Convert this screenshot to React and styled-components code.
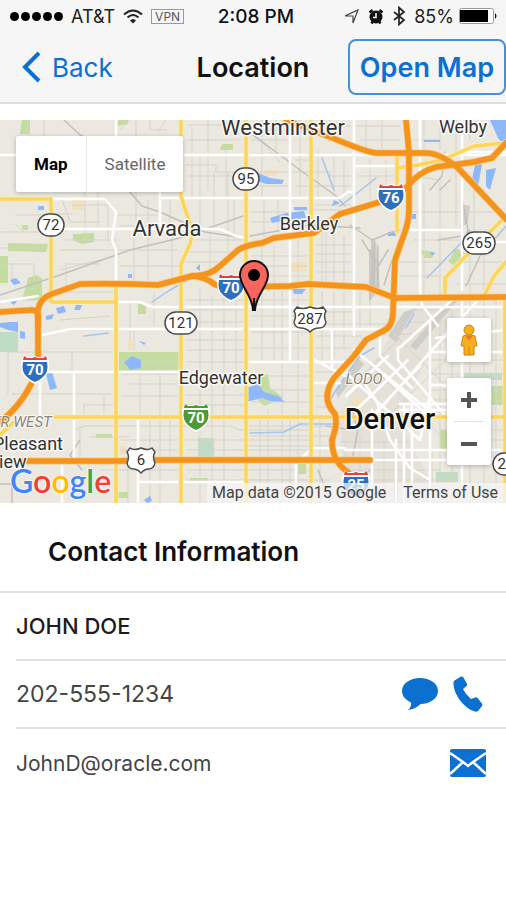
import React, { useState } from 'react';
import styled, { createGlobalStyle } from 'styled-components';

const colors = {
  COLOR_LINK: '#0b70cf',
  COLOR_BAR: '#f6f6f7',
  COLOR_LINE: '#dfe2e4',
  COLOR_LAND: '#ebe8e0',
  COLOR_STREET: '#d6d3ca',
  COLOR_PARK: '#c4dca0',
  COLOR_WATER: '#8fb8fb',
  COLOR_YELLOW: '#fbd55c',
  COLOR_ORANGE: '#f4941c',
};

/* ---------- map data ---------- */

const blocks = [
  'M28 120V135M44 120V136M16 215H50M16 225L24 232M0 232H50M0 264H34V283M0 248H50M12 283V264M66 264V285M66 264H100',
  'M62 200L70 222H100M58 214H72M72 205H112M66 240H116M60 250H116M85 192V240M98 192V226M108 200V240',
  'M120 130L130 120M136 120V136M150 120V130H166M166 120L158 132M188 125H240M188 140H240M192 130V200M208 120V190M226 150V196',
  'M186 165H216V172H244M188 176H240M200 154V228M214 172V230M228 172V250M136 192V220M148 200V232M170 200V230M118 215H158M120 226H150',
  'M134 238V280M148 236V284M172 232V280M118 250H178M120 266H180M196 240H244M188 252H240M186 262H222M210 226V270M234 200V240',
  'M60 270L116 256M62 292H116M8 300H48M60 330H112M8 352H112M8 352V394M72 352V372M12 394H112M84 405H114M84 405V417M104 396V414',
  'M60 320L110 316M130 300V340M154 292V326M134 332V350M122 362H178M122 374H178M130 384H178M122 396H178M140 372V417M160 374V503',
  'M75 430L84 426H230L240 430H310M80 430V460M90 437H130M122 440H178M122 450H178M150 420V456M170 420V456M100 470H178M128 463V503',
  'M150 470V503M186 300H244M186 310H244M186 322H244M186 340H244M186 350H244M186 362H244M200 290V370M212 296V370M224 290V503',
  'M236 290V370M186 395H244M186 405H244M200 390V503M212 385V503M186 440H310M186 450H310M186 470H310M186 480H310M250 480H330',
  'M252 130H288M252 140H288M262 120V196M276 120V150M252 154H288M252 172H330V176H350M262 142L280 162M296 160H308M300 120V198M318 150V200',
  'M320 126H350M330 120V136M334 158V200M344 160V196M252 186H288M296 186H350M252 212H286M264 200V236M278 200V232M252 222H286',
  'M296 210H340M300 210V240M316 205H350M322 222V284M252 256H308M252 266H308M252 276H308M262 248V284M274 246V284M298 240V286',
  'M316 245H352M316 254H350M316 262H350M316 272H352M334 232V284M344 236V284M326 222V284M252 300H308M252 316H308M252 332H308',
  'M262 292V362M274 292V362M282 292V360M298 292V360M252 348H308M316 312H352M316 324H386M316 336H362M316 348H350M322 292V362',
  'M334 292V358M344 292V350M360 292V330M370 290V326M252 376H308M252 390H308M252 402H308M268 410V503M282 364V503M298 364V503',
  'M250 426H330M250 436H330M250 446H330M250 490H340M260 417V503M290 417V503M316 372H332M316 396H328M316 407H330M320 420V503',
  'M354 126H400M366 120V150M382 120V148M360 140H400M358 176H400M370 160V200M386 160V190M414 140H440M424 120V150M440 120V150',
  'M456 120V152M470 120V140M414 176L440 180M424 186V300M440 176V300M456 170V226M474 184V236M412 212H500M414 240H460M400 262H440',
  'M400 276H440M420 240V300M470 240V296M484 240V296M456 262H506M456 284H506M412 310H440M406 322H430M400 334H420M440 320V503',
  'M452 310V503M470 300V503M484 300V503M496 300V503M428 360H506M428 374H506M428 390H506M428 400H506M440 430H506M440 440H506',
  'M345 440V503M360 436V503M384 440V503M396 450V503M340 442H410M345 470H440M345 480H450M340 490H450M432 450V503',
  'M355 350L440 435M390 330L450 390M345 392L400 338M380 424L450 356M350 372L410 432',
];

const rails = [
  'M0 295L60 275L130 250L180 238L246 215',
  'M64 120L80 135L115 150M130 192L142 206L160 212L205 232L246 238',
  'M253 135L300 170L336 196L345 206M370 250V300M350 225L372 240L372 290M372 240L392 232L400 230',
  'M374 240V292M378 246V290M362 240L376 262M388 250L376 270M392 260L384 285M250 236L310 225L360 228',
  'M445 152L442 176L430 190M450 180L440 190M438 240L462 236M466 286L480 256L506 226M462 200L468 230L460 256',
  'M352 460L358 430L352 410M360 480L370 470M318 470L330 500M326 426L352 430M82 470L70 455L80 440M0 484H12V503',
];

const whiteRoads = [
  'M0 155H506M116 120V155M51 199L105 199L116 212L112 240L116 250V285',
  'M160 192V226M160 198H290M290 198H340L348 192H354M354 120V335M290 120V362M354 166H400M420 120V290L422 305L438 326',
  'M51 229L220 229L236 236L246 238M462 120V290M462 205V230M410 230H462M496 242H506M460 152H506',
  'M0 302L38 296M116 302L140 302L152 307H506M42 335L70 329L246 329M48 372H116M74 372V460M40 372V420M120 372H180',
  'M246 362H352M138 417V503M138 482H246M62 465V503M246 329H390M332 329V367M311 358L345 376M311 383H340',
  'M462 296V378M380 335V356L395 370M430 320V395M398 348V360L445 415M452 300L397 350M480 298L430 352M430 352L376 414',
  'M430 352H506M345 372L420 440L430 395M436 338L506 330',
  'M354 350L436 416M388 356L346 396M408 360L356 410M420 366L372 416M374 366L426 414M386 362L412 388',
  'M366 386L376 400L390 440L410 468L430 480M372 410V503M396 440V503M404 404V503M412 404V503M430 395V503',
  'M345 450H506M370 460H506M400 404H448M400 410H448M430 385H448M300 460L312 448H345M296 463V503',
  'M444 386H448M462 465V483',
];

const yellowRoads = [
  'M181 120V196L184 206L193 232L190 244L181 264V503',
  'M246 120V503M311 120V503M0 199H51V302H116M116 285V503',
  'M55 417H506M505 298V503M397 156V232',
  'M397 168L418 165L442 160L474 146L506 143',
  'M445 296V278L466 256L506 216M484 296L494 276L506 262M0 435L14 422',
];

const highways = [
  'M0 312L30 310Q38 309 38 318V368Q26 402 0 422',
  'M38 326V310Q40 298 52 294L80 284Q116 283 158 285L192 276Q206 277 214 284Q218 287 240 287L290 286L308 284L366 287L395 298L506 297',
  'M192 276Q210 276 220 266L238 250Q246 245 262 243L274 238L314 233L340 214L380 202Q398 194 406 188Q418 172 436 167L474 162L492 158L506 143',
  'M286 120L330 137Q366 152 376 153H426Q440 153 458 168L506 219',
  'M406 120L409 152L409 212Q408 226 402 240L395 260L393 312Q393 328 381 332L366 340L354 356L334 378Q320 398 335 414Q338 424 332 440Q332 462 348 472',
  'M22 461H120L150 460H370',
];

const parks = [
  'M22 120H30V134H20ZM118 120H128V124L118 126ZM222 144H233V150H220ZM8 243L48 244L46 252L8 251ZM73 234L94 233V242L82 244L73 240Z',
  'M28 278L36 275L42 278V300H22ZM119 352H180V370L119 371ZM0 256H8V283H0ZM0 132V138M22 225H28V230H22ZM96 434H112V438H96Z',
  'M190 478H208V482H190ZM118 492H128V498H118ZM138 304H146V314H138ZM421 250L435 252L432 258L424 258ZM456 248L470 256L454 265L448 262Z',
  'M492 386H506V405H492ZM440 430H456V450H440ZM258 372L268 375L270 388L284 398L264 406L256 398ZM298 464H306V474H298Z',
];

const mints = ['M0 332H18V352H0Z', 'M198 438H214V458H198Z', 'M464 373H502V380H464Z', 'M436 472H458V482H436Z'];

const sands = ['M72 200H84V210H72ZM120 446H126V454H120ZM128 340H132V350H128ZM290 262H306V272H290ZM352 398H364V410L356 416ZM264 170H278V176H264Z'];

const waters = [
  'M124 362L132 356L141 360V368L130 370ZM46 374L52 372L57 388L50 390ZM38 206H44V210H38ZM10 280L16 278L21 283L14 285Z',
  'M56 308L64 306L66 312L58 314ZM46 316L54 314L52 319L46 320ZM76 305H82L80 310H74ZM0 323L10 322L18 322V332L8 330L0 327ZM20 331L25 332V339L20 338Z',
  'M56 290L66 286L62 292ZM58 308L68 306ZM139 341L146 343L144 345ZM10 302L18 300L14 305ZM128 274H132V278H128ZM196 268L200 264V271Z',
  'M256 172L270 178L284 180L282 184L266 184L258 181ZM270 218L286 213L304 211L306 218L286 220L272 223ZM294 207H307V210L294 210Z',
  'M490 120H506V148L498 138ZM475 165L482 164L478 186L471 184ZM486 170L496 168L490 190L486 186ZM424 140H440V142H424Z',
  'M430 252L435 253L432 256ZM292 289L306 289L302 294H294ZM334 200L340 203L332 206ZM411 214H416V219H411ZM388 232H396V236H388Z',
  'M246 388L258 384L264 392L278 396L285 402L270 401L262 398L246 402ZM144 500L150 496L152 501L147 503Z',
];

const streams = [
  'M427 278L460 244L470 230M340 206L356 194L376 178M322 158L334 190',
  'M330 400L340 384L360 356L374 348M406 328L414 314',
  'M250 433L284 432L300 424L340 424M84 336L108 333M152 302L170 290L188 280',
];

const Streets = ({ paths, stroke, width }) => (
  <g fill="none" stroke={stroke} strokeWidth={width} strokeLinejoin="round" strokeLinecap="round">
    {paths.map((d) => (
      <path key={d} d={d} />
    ))}
  </g>
);

const Areas = ({ paths, fill }) => <path d={paths.join('')} fill={fill} />;

const Interstate = ({ x, y, label, green }) => (
  <g transform={`translate(${x} ${y})`}>
    <path
      d="M-11 -14L-9 -12H-3L0 -13L3 -12H9L11 -14L14 -7Q15 3 9 9Q5 13 0 15Q-5 13 -9 9Q-15 3 -14 -7Z"
      fill="#fff"
    />
    <path d="M-11 -13L-8 -11H-3L0 -12L3 -11H8L11 -13L12 -9H-12Z" fill={green ? '#4c9a35' : '#dc4448'} />
    <path d="M-12 -7H12Q14 3 8 8Q5 11 0 13Q-5 11 -8 8Q-14 3 -12 -7Z" fill={green ? '#4c9a35' : '#2d6fbd'} />
    <ShieldText y="6" $light>
      {label}
    </ShieldText>
  </g>
);

const StateRoute = ({ x, y, label }) => {
  const w = label.length > 2 ? 32 : 26;
  return (
    <g transform={`translate(${x} ${y})`}>
      <rect x={-w / 2} y="-11" width={w} height="22" rx="11" fill="#fff" stroke="#4d4d4d" strokeWidth="1.5" />
      <ShieldText y="5">{label}</ShieldText>
    </g>
  );
};

const UsRoute = ({ x, y, label }) => {
  const w = label.length > 2 ? 16 : 14;
  return (
    <g transform={`translate(${x} ${y})`}>
      <path
        d={`M${-w + 3} -12Q${-w / 2} -9 0 -12Q${w / 2} -9 ${w - 3} -12L${w} -8Q${w - 3} -3 ${w} 3Q${w - 1} 9 ${w - 7} 9Q4 9 0 13Q-4 9 ${-w + 7} 9Q${-w + 1} 9 ${-w} 3Q${-w + 3} -3 ${-w} -8Z`}
        fill="#fff"
        stroke="#4d4d4d"
        strokeWidth="1.5"
      />
      <ShieldText y="5">{label}</ShieldText>
    </g>
  );
};

const DenverMap = () => (
  <MapSvg viewBox="0 120 506 383" preserveAspectRatio="xMidYMid slice" role="img" aria-label="Map of Denver">
    <rect x="0" y="120" width="506" height="383" fill={colors.COLOR_LAND} />
    <path d="M340 412L395 330L420 300L470 298L430 350L400 420L440 503H345Z" fill="#e5e1d9" />
    <path
      d="M372 250L376 240L380 290L370 300ZM388 336L404 312L416 308L396 342ZM410 346L450 300H458L416 350ZM335 390L358 358L364 364L338 398ZM462 204L470 206L468 222L460 230Z"
      fill="#cfcdc9"
    />
    <Areas paths={sands} fill="#f3e1bd" />
    <Areas paths={parks} fill={colors.COLOR_PARK} />
    <Areas paths={mints} fill="#bfdcc4" />
    <Streets paths={blocks} stroke={colors.COLOR_STREET} width="1" />
    <Areas paths={waters} fill={colors.COLOR_WATER} />
    <Streets paths={streams} stroke="#a5c4f0" width="1.5" />
    <Streets paths={rails} stroke="#c2c0bc" width="1.5" />
    <Streets paths={whiteRoads} stroke="#fff" width="2.5" />
    <Streets paths={yellowRoads} stroke="#fbeeba" width="5" />
    <Streets paths={yellowRoads} stroke={colors.COLOR_YELLOW} width="3.5" />
    <Streets paths={highways} stroke="#f9c98a" width="7" />
    <Streets paths={highways} stroke={colors.COLOR_ORANGE} width="5.5" />

    <StateRoute x={51} y={225} label="72" />
    <StateRoute x={246} y={179} label="95" />
    <StateRoute x={479} y={243} label="265" />
    <StateRoute x={181} y={323} label="121" />
    <StateRoute x={506} y={464} label="26" />
    <UsRoute x={310} y={319} label="287" />
    <UsRoute x={141} y={460} label="6" />
    <Interstate x={391} y={197} label="76" />
    <Interstate x={231} y={287} label="70" />
    <Interstate x={35} y={369} label="70" />
    <Interstate x={196} y={417} label="70" green />
    <Interstate x={356} y={484} label="25" />

    <PlaceText x="283" y="135" $size={22}>Westminster</PlaceText>
    <PlaceText x="463" y="133" $size={18}>Welby</PlaceText>
    <PlaceText x="167" y="236" $size={22}>Arvada</PlaceText>
    <PlaceText x="309" y="230" $size={18}>Berkley</PlaceText>
    <PlaceText x="221" y="384" $size={18}>Edgewater</PlaceText>
    <PlaceText x="28" y="450" $size={18}>Pleasant</PlaceText>
    <PlaceText x="7" y="468" $size={18}>View</PlaceText>
    <PlaceText x="390" y="429" $size={29} $dark>Denver</PlaceText>
    <AreaText x="364" y="384">LODO</AreaText>
    <AreaText x="22" y="427">ER WEST</AreaText>

    <path
      d="M253 310C252 294 240 287 240 275A14 14 0 0 1 268 275C268 287 256 294 255 310Z"
      fill="#f9645c"
      stroke="#111"
      strokeWidth="2"
    />
    <path d="M254 298V310" stroke="#111" strokeWidth="2" />
    <circle cx="254" cy="275" r="6" fill="#000" />
  </MapSvg>
);

/* ---------- status bar icons ---------- */

const WifiIcon = () => (
  <svg width="20" height="15" viewBox="0 0 20 15" fill="none" stroke="#222" strokeWidth="2">
    <path d="M1 5.5Q10 -2.5 19 5.5M4.5 8.5Q10 3.5 15.5 8.5" />
    <path d="M7 11.5Q10 8.5 13 11.5L10 14.5Z" fill="#222" stroke="none" />
  </svg>
);

const StatusIcons = () => (
  <svg width="64" height="20" viewBox="0 0 64 20">
    <path d="M0 10L13 4L8 17V10Z" fill="none" stroke="#444" strokeWidth="1.2" />
    <circle cx="31" cy="11" r="6.5" fill="#111" />
    <path
      d="M24.5 6.5L27.5 4M34.500 4L37.5 6.5M26.5 17.5L28 15.5M35.5 17.5L34 15.5"
      stroke="#111"
      strokeWidth="2.5"
    />
    <path d="M31 7V11.5H28" fill="none" stroke="#fff" strokeWidth="1.5" />
    <path d="M49 6L59 14L54 18.5V1.5L59 6L49 14" fill="none" stroke="#222" strokeWidth="1.7" />
  </svg>
);

const BatteryIcon = () => (
  <svg width="39" height="16" viewBox="0 0 39 16">
    <rect x="0.5" y="0.5" width="34" height="15" rx="2" fill="#fff" stroke="#999" />
    <rect x="1" y="2" width="28" height="12" fill="#000" />
    <path d="M36 5Q39 8 36 11Z" fill="#111" />
  </svg>
);

const PegmanIcon = () => (
  <svg width="18" height="32" viewBox="0 0 18 32">
    <path
      d="M3 12Q9 9 15 12L17 22H14V31H4V22H1Z"
      fill="#f6b01e"
      stroke="#c98613"
      strokeLinejoin="round"
    />
    <circle cx="9" cy="6" r="5" fill="#f6b01e" stroke="#c98613" />
    <path d="M5.500 12L9 17L12.5 12Z" fill="#ee7a2c" />
    <path d="M9 23V31" stroke="#c98613" />
  </svg>
);

/* ---------- contact icons ---------- */

const ChatIcon = () => (
  <svg width="36" height="34" viewBox="0 0 36 34" fill="currentColor">
    <path d="M18 1C8 1 0 6.5 0 14C0 19 3.5 23 9 25.5Q9.5 30 6 33Q14 32 18.5 27C28 27 36 21.500 36 14C36 6.5 28 1 18 1Z" />
  </svg>
);

const PhoneIcon = () => (
  <svg width="30" height="36" viewBox="0 0 30 36" fill="currentColor">
    <path d="M1.500 4.5L8 0.5Q9.5 0 10.5 1.5L14 8Q14.5 9.5 13 10.5L10 13Q12.5 18.500 18 23L22 21.5Q23.5 21 24.5 22L29 27.5Q30 29 29 30L25 35Q24 36 22 35.500C10 32 0 17 0.5 6.5Q0.5 5 1.5 4.5Z" />
  </svg>
);

const MailIcon = () => (
  <svg width="36" height="30" viewBox="0 0 36 30">
    <rect y="1" width="36" height="28" rx="2" fill="currentColor" />
    <path d="M0 5L13 14L18 18L23 14L36 5M0 26L13 14M36 26L23 14" fill="none" stroke="#fff" strokeWidth="2.5" />
  </svg>
);

const googleLetters = [
  ['G', '#4285f4'],
  ['o', '#ea4335'],
  ['o', '#fbbc05'],
  ['g', '#4285f4'],
  ['l', '#34a853'],
  ['e', '#ea4335'],
];

const App = () => {
  const [mapType, setMapType] = useState('Map');

  return (
    <Page>
      <GlobalStyle />

      <StatusBar>
        <StatusGroup>
          <Signal>
            <Dot />
            <Dot />
            <Dot />
            <Dot />
            <Dot />
          </Signal>
          <span>AT&amp;T</span>
          <WifiIcon />
          <Vpn>VPN</Vpn>
        </StatusGroup>
        <Clock>2:08 PM</Clock>
        <StatusGroup $end>
          <StatusIcons />
          <span>85%</span>
          <BatteryIcon />
        </StatusGroup>
      </StatusBar>

      <NavBar>
        <BackBtn type="button">
          <svg width="20" height="32" viewBox="0 0 20 32" fill="none" stroke="currentColor" strokeWidth="4">
            <path d="M17 2L3 16L17 30" />
          </svg>
          Back
        </BackBtn>
        <Title>Location</Title>
        <OpenMapBtn type="button">Open Map</OpenMapBtn>
      </NavBar>

      <MapBox>
        <DenverMap />
        <MapTypes>
          {['Map', 'Satellite'].map((type) => (
            <MapTypeBtn key={type} type="button" $active={mapType === type} onClick={() => setMapType(type)}>
              {type}
            </MapTypeBtn>
          ))}
        </MapTypes>
        <MapControls>
          <PegmanBtn type="button" aria-label="Street View">
            <PegmanIcon />
          </PegmanBtn>
          <ZoomGroup>
            <ZoomBtn type="button" aria-label="Zoom in">
              <svg width="16" height="16" viewBox="0 0 16 16" stroke="#555" strokeWidth="4">
                <path d="M0 8H16M8 0V16" />
              </svg>
            </ZoomBtn>
            <ZoomLine />
            <ZoomBtn type="button" aria-label="Zoom out">
              <svg width="16" height="16" viewBox="0 0 16 16" stroke="#555" strokeWidth="4">
                <path d="M0 8H16" />
              </svg>
            </ZoomBtn>
          </ZoomGroup>
        </MapControls>
        <GoogleLogo>
          {googleLetters.map(([letter, color], i) => (
            <Letter key={i} $color={color}>
              {letter}
            </Letter>
          ))}
        </GoogleLogo>
        <Attribution>
          <Credit>Map data ©2015 Google</Credit>
          <TermsLink href="#terms">Terms of Use</TermsLink>
        </Attribution>
      </MapBox>

      <Heading>Contact Information</Heading>
      <ContactList>
        <ContactRow>
          <Name>JOHN DOE</Name>
        </ContactRow>
        <ContactRow>
          <Phone>202-555-1234</Phone>
          <IconLink href="sms:2025551234" aria-label="Send message">
            <ChatIcon />
          </IconLink>
          <IconLink href="tel:2025551234" aria-label="Call">
            <PhoneIcon />
          </IconLink>
        </ContactRow>
        <ContactRow>
          <Email>JohnD@oracle.com</Email>
          <IconLink href="mailto:JohnD@oracle.com" aria-label="Send email">
            <MailIcon />
          </IconLink>
        </ContactRow>
      </ContactList>
    </Page>
  );
};

export default App;

const GlobalStyle = createGlobalStyle`
  * {
    box-sizing: border-box;
  }

  body {
    margin: 0;
    background-color: white;
    font-family: Inter, "Liberation Sans", sans-serif;
  }

  button {
    border: 0;
    padding: 0;
    background: none;
    font-family: inherit;
    cursor: pointer;
  }

  svg {
    display: block;
    flex: none;
  }
`;

const Page = styled.div`
  min-height: 100vh;
  background-color: white;
`;

const StatusBar = styled.div`
  display: grid;
  grid-template-columns: 1fr auto 1fr;
  align-items: center;
  height: 32px;
  padding: 0 8px 0 10px;
  background-color: ${colors.COLOR_BAR};
  color: #222;
  font-size: 18px;
  white-space: nowrap;
`;

const StatusGroup = styled.div`
  display: flex;
  align-items: center;
  justify-content: ${({ $end }) => ($end ? 'flex-end' : 'flex-start')};
  gap: ${({ $end }) => ($end ? '5px' : '8px')};
`;

const Signal = styled.div`
  display: flex;
  gap: 2px;
`;

const Dot = styled.span`
  width: 9px;
  height: 9px;
  border-radius: 50%;
  background-color: black;
`;

const Vpn = styled.span`
  border: 1px solid #999;
  padding: 0 3px;
  line-height: 13px;
  font-size: 12px;
  color: #555;
`;

const Clock = styled.span`
  padding-left: 4px;
  font-size: 19px;
  font-weight: 500;
  color: #111;
`;

const NavBar = styled.header`
  display: grid;
  grid-template-columns: 1fr auto 1fr;
  align-items: center;
  height: 72px;
  background-color: ${colors.COLOR_BAR};
  border-bottom: 2px solid #dcdcdd;
`;

const BackBtn = styled.button`
  display: flex;
  align-items: center;
  justify-self: start;
  gap: 10px;
  padding-left: 22px;
  color: ${colors.COLOR_LINK};
  font-size: 26px;
`;

const Title = styled.h1`
  margin: 0;
  font-size: 27px;
  font-weight: 600;
  color: #111;
`;

const OpenMapBtn = styled.button`
  justify-self: end;
  height: 56px;
  padding: 0 10px;
  border: 2px solid #4590d6;
  border-radius: 8px;
  color: ${colors.COLOR_LINK};
  font-size: 27px;
  font-weight: 600;
  white-space: nowrap;
`;

const MapBox = styled.section`
  position: relative;
  height: 383px;
  margin-top: 16px;
  overflow: hidden;
  font-family: Roboto, sans-serif;
`;

const MapSvg = styled.svg`
  width: 100%;
  height: 100%;
`;

const PlaceText = styled.text`
  font-size: ${({ $size }) => $size}px;
  font-weight: ${({ $dark }) => ($dark ? 500 : 400)};
  text-anchor: middle;
  fill: ${({ $dark }) => ($dark ? '#111' : '#333')};
  stroke: rgba(255, 255, 255, 0.8);
  stroke-width: 3px;
  stroke-linejoin: round;
  paint-order: stroke;
`;

const AreaText = styled.text`
  font-size: 15px;
  font-style: italic;
  text-anchor: middle;
  fill: #8b8678;
  stroke: rgba(255, 255, 255, 0.7);
  stroke-width: 2px;
  paint-order: stroke;
`;

const ShieldText = styled.text`
  font-size: 15px;
  font-weight: ${({ $light }) => ($light ? 700 : 400)};
  text-anchor: middle;
  fill: ${({ $light }) => ($light ? '#fff' : '#333')};
`;

const MapTypes = styled.div`
  position: absolute;
  top: 16px;
  left: 16px;
  display: flex;
  height: 56px;
  border-radius: 2px;
  background-color: white;
  box-shadow: 0 1px 4px rgba(0, 0, 0, 0.25);
`;

const MapTypeBtn = styled.button`
  padding: 0 18px;
  font-size: 17px;
  font-weight: ${({ $active }) => ($active ? 700 : 400)};
  color: ${({ $active }) => ($active ? '#000' : '#666')};

  & + & {
    border-left: 1px solid #e6e6e6;
  }
`;

const MapControls = styled.div`
  position: absolute;
  right: 15px;
  bottom: 38px;
  display: flex;
  flex-direction: column;
  gap: 16px;
`;

const PegmanBtn = styled.button`
  display: flex;
  align-items: center;
  justify-content: center;
  width: 44px;
  height: 44px;
  border-radius: 2px;
  background-color: white;
  box-shadow: 0 1px 4px rgba(0, 0, 0, 0.25);
`;

const ZoomGroup = styled.div`
  border-radius: 2px;
  background-color: white;
  box-shadow: 0 1px 4px rgba(0, 0, 0, 0.25);
`;

const ZoomBtn = styled.button`
  display: flex;
  align-items: center;
  justify-content: center;
  width: 44px;
  height: 43px;
`;

const ZoomLine = styled.div`
  height: 1px;
  margin: 0 7px;
  background-color: #e2e2e2;
`;

const GoogleLogo = styled.div`
  position: absolute;
  left: 10px;
  bottom: 2px;
  line-height: 40px;
  font-family: Lato, sans-serif;
  font-size: 32px;
  font-weight: 600;
  text-shadow: 0 0 2px white, 0 0 2px white;
`;

const Letter = styled.span`
  color: ${({ $color }) => $color};
`;

const Attribution = styled.div`
  position: absolute;
  right: 0;
  bottom: 0;
  display: flex;
  gap: 4px;
  line-height: 20px;
  font-size: 16px;
  color: #444;
  white-space: nowrap;
`;

const Credit = styled.span`
  padding: 0 8px 0 5px;
  background-color: rgba(245, 245, 245, 0.75);
`;

const TermsLink = styled.a`
  padding: 0 8px 0 5px;
  background-color: rgba(245, 245, 245, 0.75);
  color: #444;
  text-decoration: none;
`;

const Heading = styled.h2`
  margin: 0;
  padding: 0 48px;
  height: 90px;
  line-height: 98px;
  border-bottom: 2px solid ${colors.COLOR_LINE};
  font-size: 26px;
  font-weight: 600;
  color: #111;
`;

const ContactList = styled.ul`
  margin: 0;
  padding: 0 0 0 16px;
  list-style: none;
`;

const ContactRow = styled.li`
  display: flex;
  align-items: center;
  gap: 12px;
  height: 68px;
  padding-right: 20px;
  border-bottom: 2px solid ${colors.COLOR_LINE};

  &:last-child {
    border-bottom: 0;
  }
`;

const Name = styled.span`
  flex: 1;
  font-size: 22px;
  font-weight: 500;
  color: #1c1c1c;
`;

const Phone = styled.span`
  flex: 1;
  font-size: 23px;
  color: #444;
`;

const Email = styled.span`
  flex: 1;
  font-size: 21px;
  color: #444;
`;

const IconLink = styled.a`
  display: flex;
  justify-content: center;
  width: 36px;
  color: ${colors.COLOR_LINK};
`;
